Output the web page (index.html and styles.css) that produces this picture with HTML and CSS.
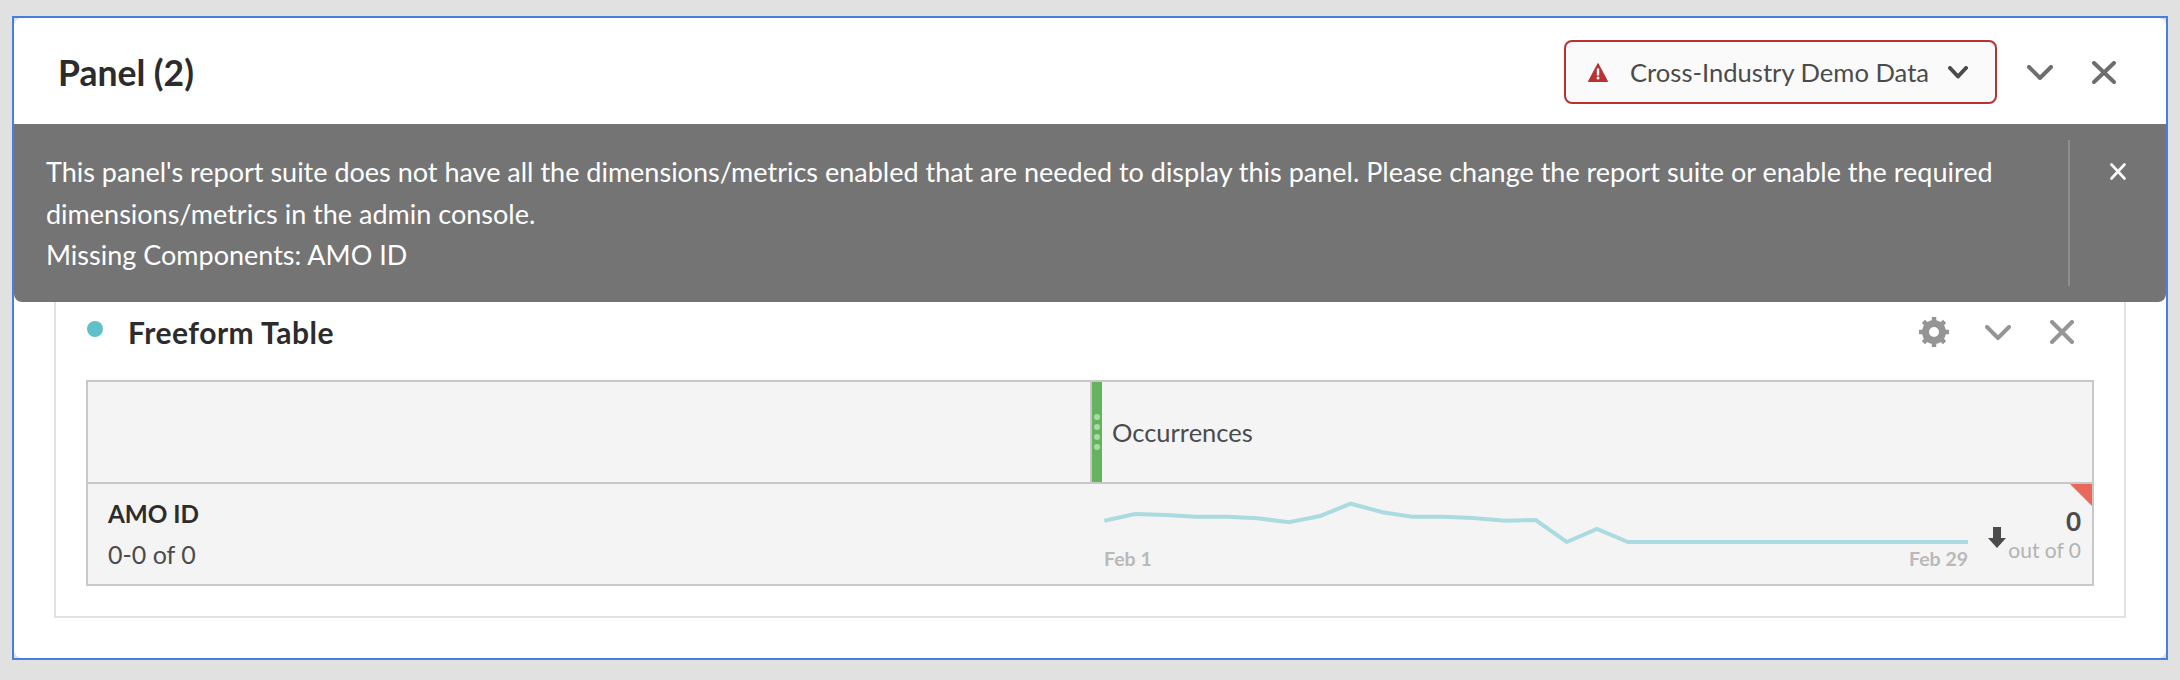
FILE: index.html
```html
<!DOCTYPE html>
<html lang="en">
<head>
    <meta charset="UTF-8">
    <meta name="viewport" content="width=device-width, initial-scale=1.0">
    <title>Panel (2)</title>
    <link rel="stylesheet" href="styles.css">
</head>
<body>
    <div class="frame">
        <div class="panel">
            <div class="panel-header">
                <h1 class="panel-title">Panel (2)</h1>
                <div class="suite-select">
                    <svg class="icon-warning" width="20" height="19" viewBox="0 0 20 19">
                        <path d="M10 0.5 19.6 18.5H0.4Z" fill="#b83232" stroke="#b83232" stroke-linejoin="round"/>
                        <rect x="8.8" y="5.5" width="2.4" height="7" fill="#fff"/>
                        <circle cx="10" cy="15" r="1.5" fill="#fff"/>
                    </svg>
                    <span class="suite-name">Cross-Industry Demo Data</span>
                    <svg width="20" height="13" viewBox="0 0 20 13"><path d="M2 2 10 10.5 18 2" class="line dark"/></svg>
                </div>
                <svg class="btn-collapse" width="26" height="15" viewBox="0 0 26 15"><path d="M2 2 13 13 24 2" class="line mid"/></svg>
                <svg class="btn-close" width="24" height="23" viewBox="0 0 24 23"><path d="M2 2 22 21M22 2 2 21" class="line mid"/></svg>
            </div>

            <div class="alert">
                <div class="alert-text">
                    This panel's report suite does not have all the dimensions/metrics enabled that are needed to display this panel. Please change the report suite or enable the required dimensions/metrics in the admin console.<br>
                    Missing Components: AMO ID
                </div>
                <div class="alert-close">
                    <svg width="16" height="17" viewBox="0 0 16 17"><path d="M1.5 1.5 14.5 15.5M14.5 1.5 1.5 15.5" class="line white"/></svg>
                </div>
            </div>

            <div class="card">
                <div class="card-header">
                    <span class="card-dot"></span>
                    <h2 class="card-title">Freeform Table</h2>
                    <svg class="btn-gear" width="32" height="32" viewBox="0 0 32 32">
                        <circle cx="16" cy="16" r="8.5" fill="none" stroke="#959595" stroke-width="7"/>
                        <path d="M16 1V31M1 16H31M5.4 5.4 26.6 26.6M26.6 5.4 5.4 26.6" stroke="#959595" stroke-width="4.5" stroke-dasharray="6 18 6" fill="none"/>
                    </svg>
                    <svg class="btn-collapse-sm" width="26" height="15" viewBox="0 0 26 15"><path d="M2 2 13 13 24 2" class="line light"/></svg>
                    <svg class="btn-close-sm" width="24" height="24" viewBox="0 0 24 24"><path d="M2 2 22 22M22 2 2 22" class="line light"/></svg>
                </div>

                <div class="table">
                    <div class="table-head">
                        <div class="head-blank"></div>
                        <div class="head-metric">
                            <div class="metric-bar">
                                <i></i><i></i><i></i><i></i>
                            </div>
                            <span class="metric-name">Occurrences</span>
                        </div>
                    </div>
                    <div class="table-row">
                        <div class="row-label">
                            <div class="dim-name">AMO ID</div>
                            <div class="dim-count">0-0 of 0</div>
                        </div>
                        <div class="spark">
                            <svg class="spark-line" width="870" height="50" viewBox="0 0 870 50">
                                <polyline fill="none" stroke="#aadbe0" stroke-width="4" points="4.3,23.7 35,17 66,18 96,19.7 126.7,19.7 157.7,21.3 189,25.3 220,19 250.7,6.7 282.7,15.3 312,19.7 343,19.7 373,21 405,23.7 435.7,23 466.7,45 497,32 528,45 868,45"/>
                            </svg>
                            <div class="spark-dates">
                                <span>Feb 1</span>
                                <span>Feb 29</span>
                            </div>
                        </div>
                        <div class="total">
                            <svg class="arrow-down" width="18" height="21" viewBox="0 0 18 21"><path d="M5 0H13V11H18L9 21 0 11H5Z" fill="#4b4b4b"/></svg>
                            <div class="total-values">
                                <div class="total-num">0</div>
                                <div class="total-of">out of 0</div>
                            </div>
                            <span class="total-flag"></span>
                        </div>
                    </div>
                </div>
            </div>
        </div>
    </div>
</body>
</html>
```

FILE: styles.css
```css
* {
    box-sizing: border-box;
}

body {
    margin: 0;
    padding: 16px 12px 0;
    height: 680px;
    background-color: #e1e1e1;
    font-family: Lato, "Open Sans", sans-serif;
    overflow: hidden;
}

h1, h2 {
    margin: 0;
}

.frame {
    width: 2156px;
    height: 644px;
    border: 2px solid #4580e0;
}

.panel {
    height: 640px;
    background-color: white;
    border-radius: 8px;
}

.line {
    fill: none;
    stroke-width: 4;
    stroke-linecap: round;
    stroke-linejoin: round;
}

.line.dark { stroke: #4b4b4b; }
.line.mid { stroke: #6e6e6e; }
.line.light { stroke: #959595; }
.line.white { stroke: white; stroke-width: 2.6; }

/* header */
.panel-header {
    height: 106px;
    padding: 2px 50px 0 44px;
    display: flex;
    align-items: center;
}

.panel-title {
    flex: 1;
    font-size: 35.5px;
    font-weight: 700;
    color: #2c2c2c;
}

.suite-select {
    width: 433px;
    height: 64px;
    padding: 0 27px 0 22px;
    display: flex;
    align-items: center;
    background-color: #fafafa;
    border: 2px solid #b83232;
    border-radius: 8px;
}

.suite-name {
    flex: 1;
    margin-left: 22px;
    font-size: 25.6px;
    color: #4b4b4b;
}

.btn-collapse {
    margin-left: 30px;
}

.btn-close {
    margin-left: 39px;
}

/* alert */
.alert {
    height: 178px;
    padding: 16px 0;
    display: flex;
    background-color: #747474;
    border-radius: 0 0 8px 8px;
}

.alert-text {
    width: 2056px;
    padding: 11px 60px 0 32px;
    font-size: 27px;
    line-height: 41.5px;
    color: white;
    border-right: 2px solid #8e8e8e;
}

.alert-close {
    flex: 1;
    padding-top: 23px;
    display: flex;
    justify-content: center;
    align-items: flex-start;
}

/* card */
.card {
    height: 316px;
    margin: 0 40px;
    border: 2px solid #e1e1e1;
    border-top: none;
}

.card-header {
    height: 78px;
    padding: 14px 50px 0 31px;
    display: flex;
    align-items: flex-start;
}

.card-dot {
    width: 16px;
    height: 16px;
    margin-top: 5px;
    background-color: #5fc0c8;
    border-radius: 50%;
}

.card-title {
    flex: 1;
    margin-left: 25px;
    margin-top: -4px;
    font-size: 30px;
    line-height: 40px;
    font-weight: 700;
    letter-spacing: 0.5px;
    color: #2c2c2c;
}

.btn-collapse-sm {
    margin-left: 35px;
    margin-top: 9px;
}

.btn-close-sm {
    margin-left: 39px;
    margin-top: 4px;
}

/* table */
.table {
    margin: 0 30px;
    height: 206px;
    background-color: #f4f4f4;
    border: 2px solid #c8c8c8;
}

.table-head {
    height: 102px;
    display: flex;
    border-bottom: 2px solid #c8c8c8;
}

.head-blank {
    width: 1002px;
}

.head-metric {
    flex: 1;
    display: flex;
    align-items: center;
    border-left: 2px solid #c8c8c8;
}

.metric-bar {
    width: 10px;
    height: 100%;
    padding-top: 32px;
    display: flex;
    flex-direction: column;
    align-items: center;
    gap: 4px;
    background-color: #66b35f;
}

.metric-bar i {
    width: 6px;
    height: 6px;
    background-color: #a9dba5;
    border-radius: 50%;
}

.metric-name {
    margin-left: 10px;
    font-size: 25.5px;
    color: #4b4b4b;
}

.table-row {
    height: 100px;
    display: flex;
}

.row-label {
    width: 1012px;
    padding: 15px 0 0 20px;
}

.dim-name {
    font-size: 24.3px;
    line-height: 30px;
    font-weight: 700;
    color: #2c2c2c;
}

.dim-count {
    margin-top: 10px;
    font-size: 25px;
    line-height: 30px;
    color: #4b4b4b;
}

.spark {
    width: 870px;
    padding-top: 13px;
}

.spark-line {
    display: block;
}

.spark-dates {
    padding: 0 2px 0 4px;
    display: flex;
    justify-content: space-between;
    font-size: 19.5px;
    line-height: 24px;
    font-weight: 700;
    color: #b9b9b9;
}

.total {
    flex: 1;
    padding-right: 11px;
    display: flex;
    justify-content: flex-end;
    position: relative;
}

.arrow-down {
    margin-top: 43px;
    margin-right: 2px;
}

.total-values {
    padding-top: 22px;
    text-align: right;
}

.total-num {
    font-size: 26px;
    line-height: 30px;
    font-weight: 700;
    color: #4b4b4b;
}

.total-of {
    font-size: 21px;
    line-height: 28px;
    color: #b3b3b3;
}

.total-flag {
    position: absolute;
    top: 0;
    right: 0;
    width: 0;
    height: 0;
    border-top: 22px solid #e8695c;
    border-left: 22px solid transparent;
}
```
